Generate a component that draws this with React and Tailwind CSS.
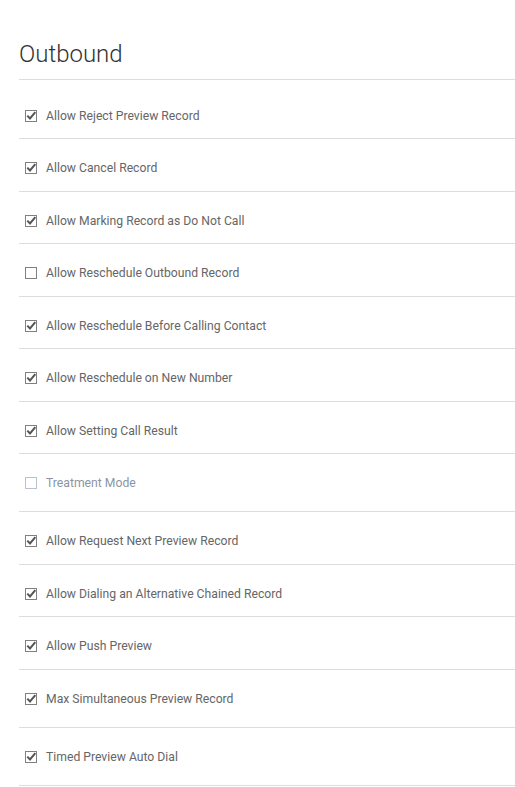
const items = [
  { label: "Allow Reject Preview Record", checked: true, first: true },
  { label: "Allow Cancel Record", checked: true },
  { label: "Allow Marking Record as Do Not Call", checked: true },
  { label: "Allow Reschedule Outbound Record", checked: false },
  { label: "Allow Reschedule Before Calling Contact", checked: true },
  { label: "Allow Reschedule on New Number", checked: true },
  { label: "Allow Setting Call Result", checked: true },
  { label: "Treatment Mode", checked: false, disabled: true, tall: true },
  { label: "Allow Request Next Preview Record", checked: true },
  { label: "Allow Dialing an Alternative Chained Record", checked: true },
  { label: "Allow Push Preview", checked: true },
  { label: "Max Simultaneous Preview Record", checked: true, tall: true },
  { label: "Timed Preview Auto Dial", checked: true, tall: true },
];

function Box({ checked, disabled }) {
  return (
    <svg width="12" height="12" viewBox="0 0 12 12" className="shrink-0 overflow-visible">
      <rect x="0.5" y="0.5" width="11" height="11" fill="#fff" stroke={disabled ? "#b9c3d0" : "#808080"} />
      {checked && <path d="M2.3 5.6 L5 8.4 L10.3 2.2" fill="none" stroke="#555" strokeWidth="2" />}
    </svg>
  );
}

export default function App() {
  return (
    <div className="min-h-screen bg-white pl-[19px]" style={{ fontFamily: "Roboto, 'Liberation Sans', sans-serif" }}>
      <h1 className="pt-[40px] pb-[10px] text-[24px] font-light leading-[29px] text-[#333]">Outbound</h1>
      <div className="border-t border-[#ddd]">
        {items.map((item) => (
          <div
            key={item.label}
            className={`flex items-center gap-[9px] border-b border-[#ddd] pl-[6px] ${item.first ? "pt-[28.5px]" : "pt-[22px]"} ${item.tall ? "pb-[21px]" : "pb-[15.5px]"}`}
          >
            <Box checked={item.checked} disabled={item.disabled} />
            <span className={`text-[12.2px] leading-[14px] ${item.disabled ? "text-[#8d95a1]" : "text-[#666]"}`}>{item.label}</span>
          </div>
        ))}
      </div>
    </div>
  );
}
